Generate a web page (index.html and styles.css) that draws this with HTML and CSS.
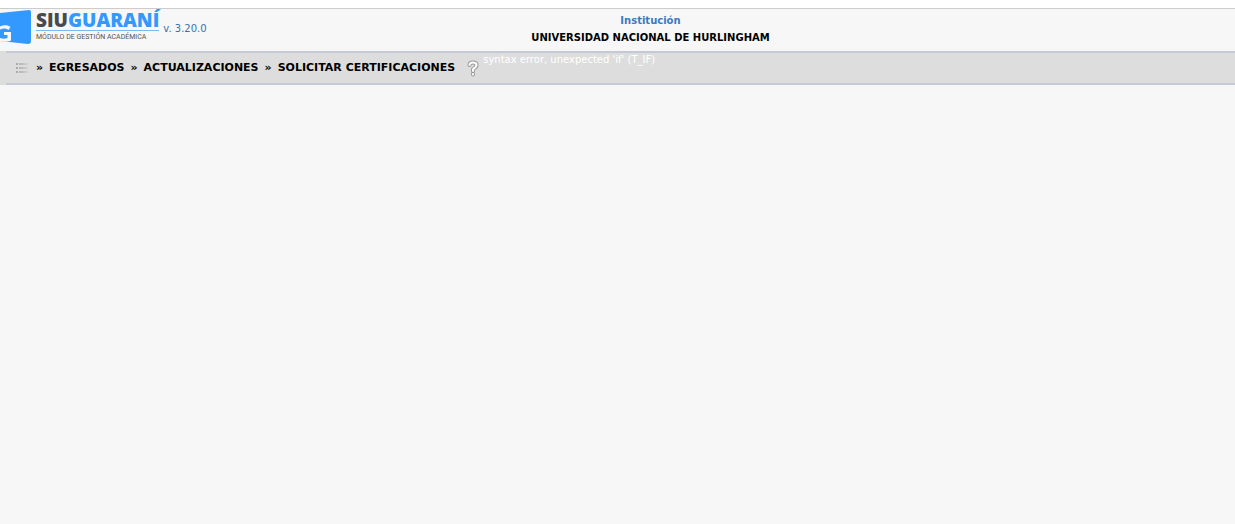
FILE: index.html
```html
<!DOCTYPE html>
<html lang="es">
<head>
<meta charset="utf-8">
<title>SIU Guaraní - Solicitar certificaciones</title>
<link rel="stylesheet" href="styles.css">
</head>
<body>
<header class="header">
  <div class="brand">
    <svg class="brand-mark" width="32" height="36" viewBox="0 0 32 36" aria-hidden="true">
      <path d="M0 4 29 1Q31 1 31 3V32Q31 35 28 35L0 32Z" fill="#3399ff"/>
      <path d="M0 17.500C4 15.500 8 16 10.500 18L8.500 21C6 19 3 19 0 20.500ZM4 23H11V31.500C8 33 4 33 0 32V29C3 30 5 30 7.500 29V26H4Z" fill="#f7f7f7"/>
    </svg>
    <div class="brand-text">
      <div class="brand-name">SIU<span class="brand-accent">GUARANÍ</span></div>
      <div class="brand-module">MÓDULO DE GESTIÓN ACADÉMICA</div>
    </div>
    <span class="version">v. 3.20.0</span>
  </div>
  <div class="institution">
    <div class="institution-label">Institución</div>
    <div class="institution-name">UNIVERSIDAD NACIONAL DE HURLINGHAM</div>
  </div>
</header>
<main class="toolbar">
  <div class="toolbar-inner">
    <button class="icon-button" type="button" aria-label="Menú">
      <svg width="12" height="10" viewBox="0 0 12 10" aria-hidden="true">
        <path d="M0 1H2M0 5H2M0 9H2" stroke="#aaa" stroke-width="2"/>
        <path d="M3 1H12M3 5H12M3 9H12" stroke="url(#fade)" stroke-width="2"/>
        <defs><linearGradient id="fade" gradientUnits="userSpaceOnUse" x1="3" x2="12" y1="0" y2="0"><stop stop-color="#b4b4b4"/><stop offset="1" stop-color="#d2d2d2"/></linearGradient></defs>
      </svg>
    </button>
    <h1 class="trail">
      <span>»</span><span>EGRESADOS</span>
      <span>»</span><span>ACTUALIZACIONES</span>
      <span>»</span><span>SOLICITAR CERTIFICACIONES</span>
    </h1>
    <button class="icon-button help" type="button" aria-label="Ayuda">
      <svg width="12" height="17" viewBox="0 0 12 17" aria-hidden="true">
        <path d="M2.500 5Q2.500 2.500 6 2.500T9.500 5Q9.500 7 7.500 8T6 11M6 14V14.500" fill="none" stroke="#999" stroke-width="4" stroke-linecap="round"/>
        <path d="M2.500 5Q2.500 2.500 6 2.500T9.500 5Q9.500 7 7.500 8T6 11M6 14V14.500" fill="none" stroke="#fff" stroke-width="2" stroke-linecap="round"/>
      </svg>
    </button>
    <p class="error">syntax error, unexpected 'if' (T_IF)</p>
  </div>
</main>
</body>
</html>
```
FILE: styles.css
```css
html {
  background: #f7f7f7;
}
body {
  margin: 0;
  border-top: 8px solid #fff;
  font-family: Verdana, "DejaVu Sans", sans-serif;
  font-size: 11px;
  color: #000;
}
.header {
  display: grid;
  grid-template-columns: 1fr auto 1fr;
  height: 42px;
  border-top: 1px solid #ccc;
}
.brand {
  display: flex;
  align-items: flex-start;
}
.brand-mark {
  flex: none;
}
.brand-text {
  margin-left: 4px;
  font-family: "Open Sans", sans-serif;
  white-space: nowrap;
}
.brand-name {
  height: 21px;
  border-bottom: 1px solid #79b8f5;
  font-size: 19px;
  font-weight: 800;
  line-height: 22px;
  color: #4a4a4a;
}
.brand-accent {
  color: #3399ff;
}
.brand-module {
  font-family: Roboto, sans-serif;
  font-size: 7px;
  line-height: 12px;
  color: #555;
}
.version {
  margin-left: 4px;
  font-size: 10px;
  line-height: 40px;
  color: #3573b1;
}
.institution {
  padding: 3px 0 0 66px;
  font-weight: bold;
  line-height: 17px;
  text-align: center;
}
.institution-label {
  font-size: 10px;
  color: #3a7abf;
}
.institution-name {
  font-size: 10px;
}
.toolbar {
  padding-left: 6px;
  background: #ddd;
}
.toolbar-inner {
  display: flex;
  align-items: center;
  height: 30px;
  padding-left: 10px;
  border: solid #c5c8d6;
  border-width: 2px 0;
}
.icon-button {
  display: flex;
  padding: 0;
  border: 0;
  background: none;
}
.trail {
  display: flex;
  gap: 6px;
  margin: 0 0 0 8px;
  font-size: 11px;
  line-height: 18px;
}
.help {
  margin-left: 12px;
}
.error {
  align-self: flex-start;
  margin: 0 0 0 4px;
  font-size: 10px;
  line-height: 14px;
  color: #fff;
}
```
